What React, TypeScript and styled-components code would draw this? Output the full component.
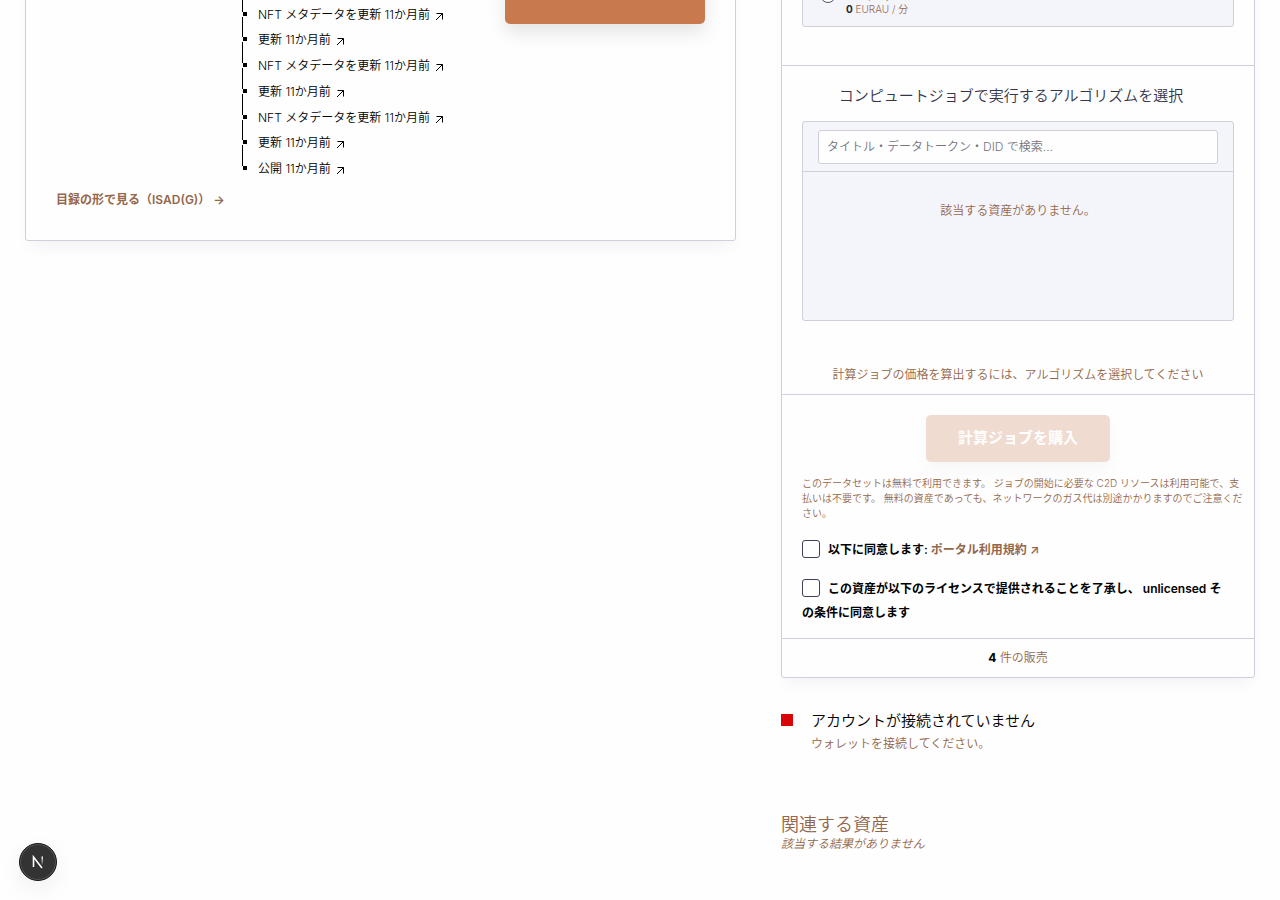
import React from 'react';
import styled, { createGlobalStyle } from 'styled-components';

const Global = createGlobalStyle`
  * { box-sizing: border-box; }
  html { overflow: hidden; }
  body {
    margin: 0;
    height: 100vh;
    overflow: hidden;
    background: #fefefe;
    color: #000;
    font: 350 12px/18px Inter, "Noto Sans CJK JP", sans-serif;
  }
  h2, h3, p, ul { margin: 0; padding: 0; font-weight: 350; }
`;

const line = '#cfcfde';
const brown = '#94674c';

const Page = styled.main`
  display: grid;
  grid-template-columns: minmax(0, 3fr) minmax(0, 2fr);
  align-items: start;
  gap: 45px;
  padding: 0 25px;
  margin-top: -40px;
`;

const Card = styled.section`
  background: #fefefe;
  border: 1px solid ${line};
  border-radius: 3px;
  box-shadow: 0 10px 16px -5px rgba(0, 0, 0, 0.05);
`;

const Article = styled(Card)`
  padding: 0 30px 31px;
`;

const HistoryRow = styled.div`
  display: flex;
  justify-content: space-between;
  align-items: flex-start;
`;

const Timeline = styled.ul`
  display: grid;
  grid-auto-rows: minmax(0, 1fr);
  height: 206px;
  margin: 15px 0 0 186px;
  list-style: none;
`;

const Entry = styled.li`
  display: flex;
  align-items: center;
  gap: 11px;
`;

const Marker = styled.svg`
  width: 5px;
  height: 26px;
  flex: none;
`;

const EntryLink = styled.a`
  display: flex;
  align-items: center;
  gap: 5px;
  color: #000;
  text-decoration: none;
  svg { margin-top: 3px; }
`;

const BigButton = styled.button`
  width: 200px;
  height: 63px;
  border: 0;
  border-radius: 5px;
  background: #c87a4e;
  box-shadow: 0 9px 18px rgba(0, 0, 0, 0.1);
`;

const TextLink = styled.a`
  color: ${brown};
  font-weight: 600;
  text-decoration: none;
`;

const CatalogLink = styled(TextLink)`
  display: block;
  margin-top: 9px;
`;

const Block = styled.section`
  padding: 0 20px;
  border-bottom: 1px solid ${line};
`;

const Panel = styled.div`
  background: #f4f5fb;
  border: 1px solid ${line};
  border-radius: 3px;
`;

const Environment = styled(Panel)`
  display: flex;
  gap: 10px;
  height: 66px;
  margin-bottom: 38px;
  padding: 25px 17px 0;
`;

const Radio = styled.input`
  appearance: none;
  width: 16px;
  height: 16px;
  margin: 0;
  border: 1px solid #50506a;
  border-radius: 50%;
  background: #fff;
`;

const EnvText = styled.label`
  display: flex;
  flex-direction: column;
  padding-top: 1px;
  font-size: 10px;
  line-height: 14px;
  color: ${brown};
  b { color: #26262e; }
`;

const Heading = styled.h2`
  padding: 18px 14px 14px 0;
  color: #35354a;
  font-size: 15px;
  line-height: 23px;
  text-align: center;
`;

const Picker = styled(Panel)`
  min-height: 200px;
`;

const SearchBar = styled.div`
  padding: 8px 15px 7px;
  border-bottom: 1px solid ${line};
`;

const Search = styled.input`
  display: block;
  width: 100%;
  height: 34px;
  padding: 0 8px 2px;
  border: 1px solid ${line};
  border-radius: 3px;
  background: #fefefe;
  font: inherit;
  &::placeholder { color: #757580; opacity: 1; }
`;

const Note = styled.p`
  color: ${brown};
  text-align: center;
`;

const Empty = styled(Note)`
  padding-top: 30px;
`;

const PriceNote = styled(Note)`
  padding: 45px 0 10px;
`;

const Buy = styled.button`
  display: block;
  height: 47px;
  margin: 20px auto 14px;
  padding: 0 32px 2px;
  border: 0;
  border-radius: 5px;
  background: #f0dbd0;
  color: #fff;
  font: 600 15px/23px Inter, "Noto Sans CJK JP", sans-serif;
  box-shadow: 0 9px 18px rgba(0, 0, 0, 0.03);
`;

const Small = styled.p`
  margin: 0 -10px 17px 0;
  color: ${brown};
  font-size: 10px;
  line-height: 15px;
`;

const Agreement = styled.label`
  display: block;
  margin-bottom: 15px;
  padding-right: 6px;
  font-weight: 600;
  line-height: 24px;
  &:last-child { margin-bottom: 13px; }
`;

const Check = styled.input`
  appearance: none;
  width: 18px;
  height: 18px;
  margin: 0 8px 4px 0;
  border: 1px solid #40405a;
  border-radius: 3px;
  background: #fff;
  vertical-align: middle;
`;

const Sales = styled(Note)`
  padding: 10px 0;
  b { color: #000; }
`;

const Wallet = styled.section`
  display: grid;
  grid-template-columns: 12px 1fr;
  gap: 18px;
  margin-top: 31px;
  h3 { font-size: 15px; line-height: 24px; }
  p { color: ${brown}; line-height: 21px; }
`;

const Status = styled.span`
  width: 12px;
  height: 12px;
  margin-top: 5px;
  background: #d80606;
`;

const Related = styled.section`
  margin-top: 59px;
  color: ${brown};
  h3 { font-size: 18px; line-height: 23px; }
  p { font-style: italic; line-height: 16px; }
`;

const DevButton = styled.button`
  position: fixed;
  left: 19px;
  bottom: 19px;
  width: 38px;
  height: 38px;
  padding: 0;
  border: 1px solid #171717;
  border-radius: 50%;
  background: #333;
  box-shadow: inset 0 0 0 1px #555, 0 8px 24px rgba(0, 0, 0, 0.06);
  svg { display: block; margin: auto; }
`;

const updates = [
  '更新 11か月前',
  'NFT メタデータを更新 11か月前',
  '更新 11か月前',
  'NFT メタデータを更新 11か月前',
  '更新 11か月前',
  'NFT メタデータを更新 11か月前',
  '更新 11か月前',
  '公開 11か月前',
];

function Arrow() {
  return (
    <svg width="9" height="9" viewBox="0 0 9 9" fill="none" stroke="currentColor" aria-hidden="true">
      <path d="M1.500 1.500h6v6M7.500 1.500l-6.500 6.500" />
    </svg>
  );
}

export default function App() {
  return (
    <>
      <Global />
      <Page>
        <Article>
          <HistoryRow>
            <Timeline>
              {updates.map((text, i) => (
                <Entry key={i}>
                  <Marker viewBox="0 0 5 26" shapeRendering="crispEdges" aria-hidden="true">
                    <path d="M0 0h1v10H0zM1 10h4v4H1z" />
                    {i < updates.length - 1 && <path d="M0 15h1v11H0z" />}
                  </Marker>
                  <EntryLink href="#">{text}<Arrow /></EntryLink>
                </Entry>
              ))}
            </Timeline>
            <BigButton type="button" aria-label="download" />
          </HistoryRow>
          <CatalogLink href="#">目録の形で見る（ISAD(G)） →</CatalogLink>
        </Article>

        <div>
          <Card>
            <Block>
              <Environment>
                <Radio type="radio" id="env" name="env" />
                <EnvText htmlFor="env">
                  <span>max per job</span>
                  <span><b>0</b> EURAU / 分</span>
                </EnvText>
              </Environment>
            </Block>
            <Block>
              <Heading>コンピュートジョブで実行するアルゴリズムを選択</Heading>
              <Picker>
                <SearchBar>
                  <Search type="search" aria-label="検索" placeholder="タイトル・データトークン・DID で検索..." />
                </SearchBar>
                <Empty>該当する資産がありません。</Empty>
              </Picker>
              <PriceNote>計算ジョブの価格を算出するには、アルゴリズムを選択してください</PriceNote>
            </Block>
            <Block>
              <Buy type="button" disabled>計算ジョブを購入</Buy>
              <Small>
                このデータセットは無料で利用できます。 ジョブの開始に必要な C2D リソースは利用可能で、支払いは不要です。 無料の資産であっても、ネットワークのガス代は別途かかりますのでご注意ください。
              </Small>
              <Agreement>
                <Check type="checkbox" />
                以下に同意します: <TextLink href="#">ポータル利用規約 ↗</TextLink>
              </Agreement>
              <Agreement>
                <Check type="checkbox" />
                この資産が以下のライセンスで提供されることを了承し、 unlicensed その条件に同意します
              </Agreement>
            </Block>
            <Sales><b>4</b> 件の販売</Sales>
          </Card>
          <Wallet>
            <Status />
            <div>
              <h3>アカウントが接続されていません</h3>
              <p>ウォレットを接続してください。</p>
            </div>
          </Wallet>
          <Related>
            <h3>関連する資産</h3>
            <p>該当する結果がありません</p>
          </Related>
        </div>
      </Page>
      <DevButton type="button" aria-label="N">
        <svg width="14" height="14" viewBox="0 0 14 14" fill="none" aria-hidden="true">
          <defs>
            <linearGradient id="stem" x1="0" y1="0" x2="0" y2="1">
              <stop stopColor="#fff" />
              <stop offset="1" stopColor="#fff" stopOpacity="0" />
            </linearGradient>
          </defs>
          <path d="M2.500 12V2l8.500 11" stroke="#fff" strokeWidth="1.600" />
          <path d="M10.500 1.500h1.500v9h-1.500z" fill="url(#stem)" />
        </svg>
      </DevButton>
    </>
  );
}
